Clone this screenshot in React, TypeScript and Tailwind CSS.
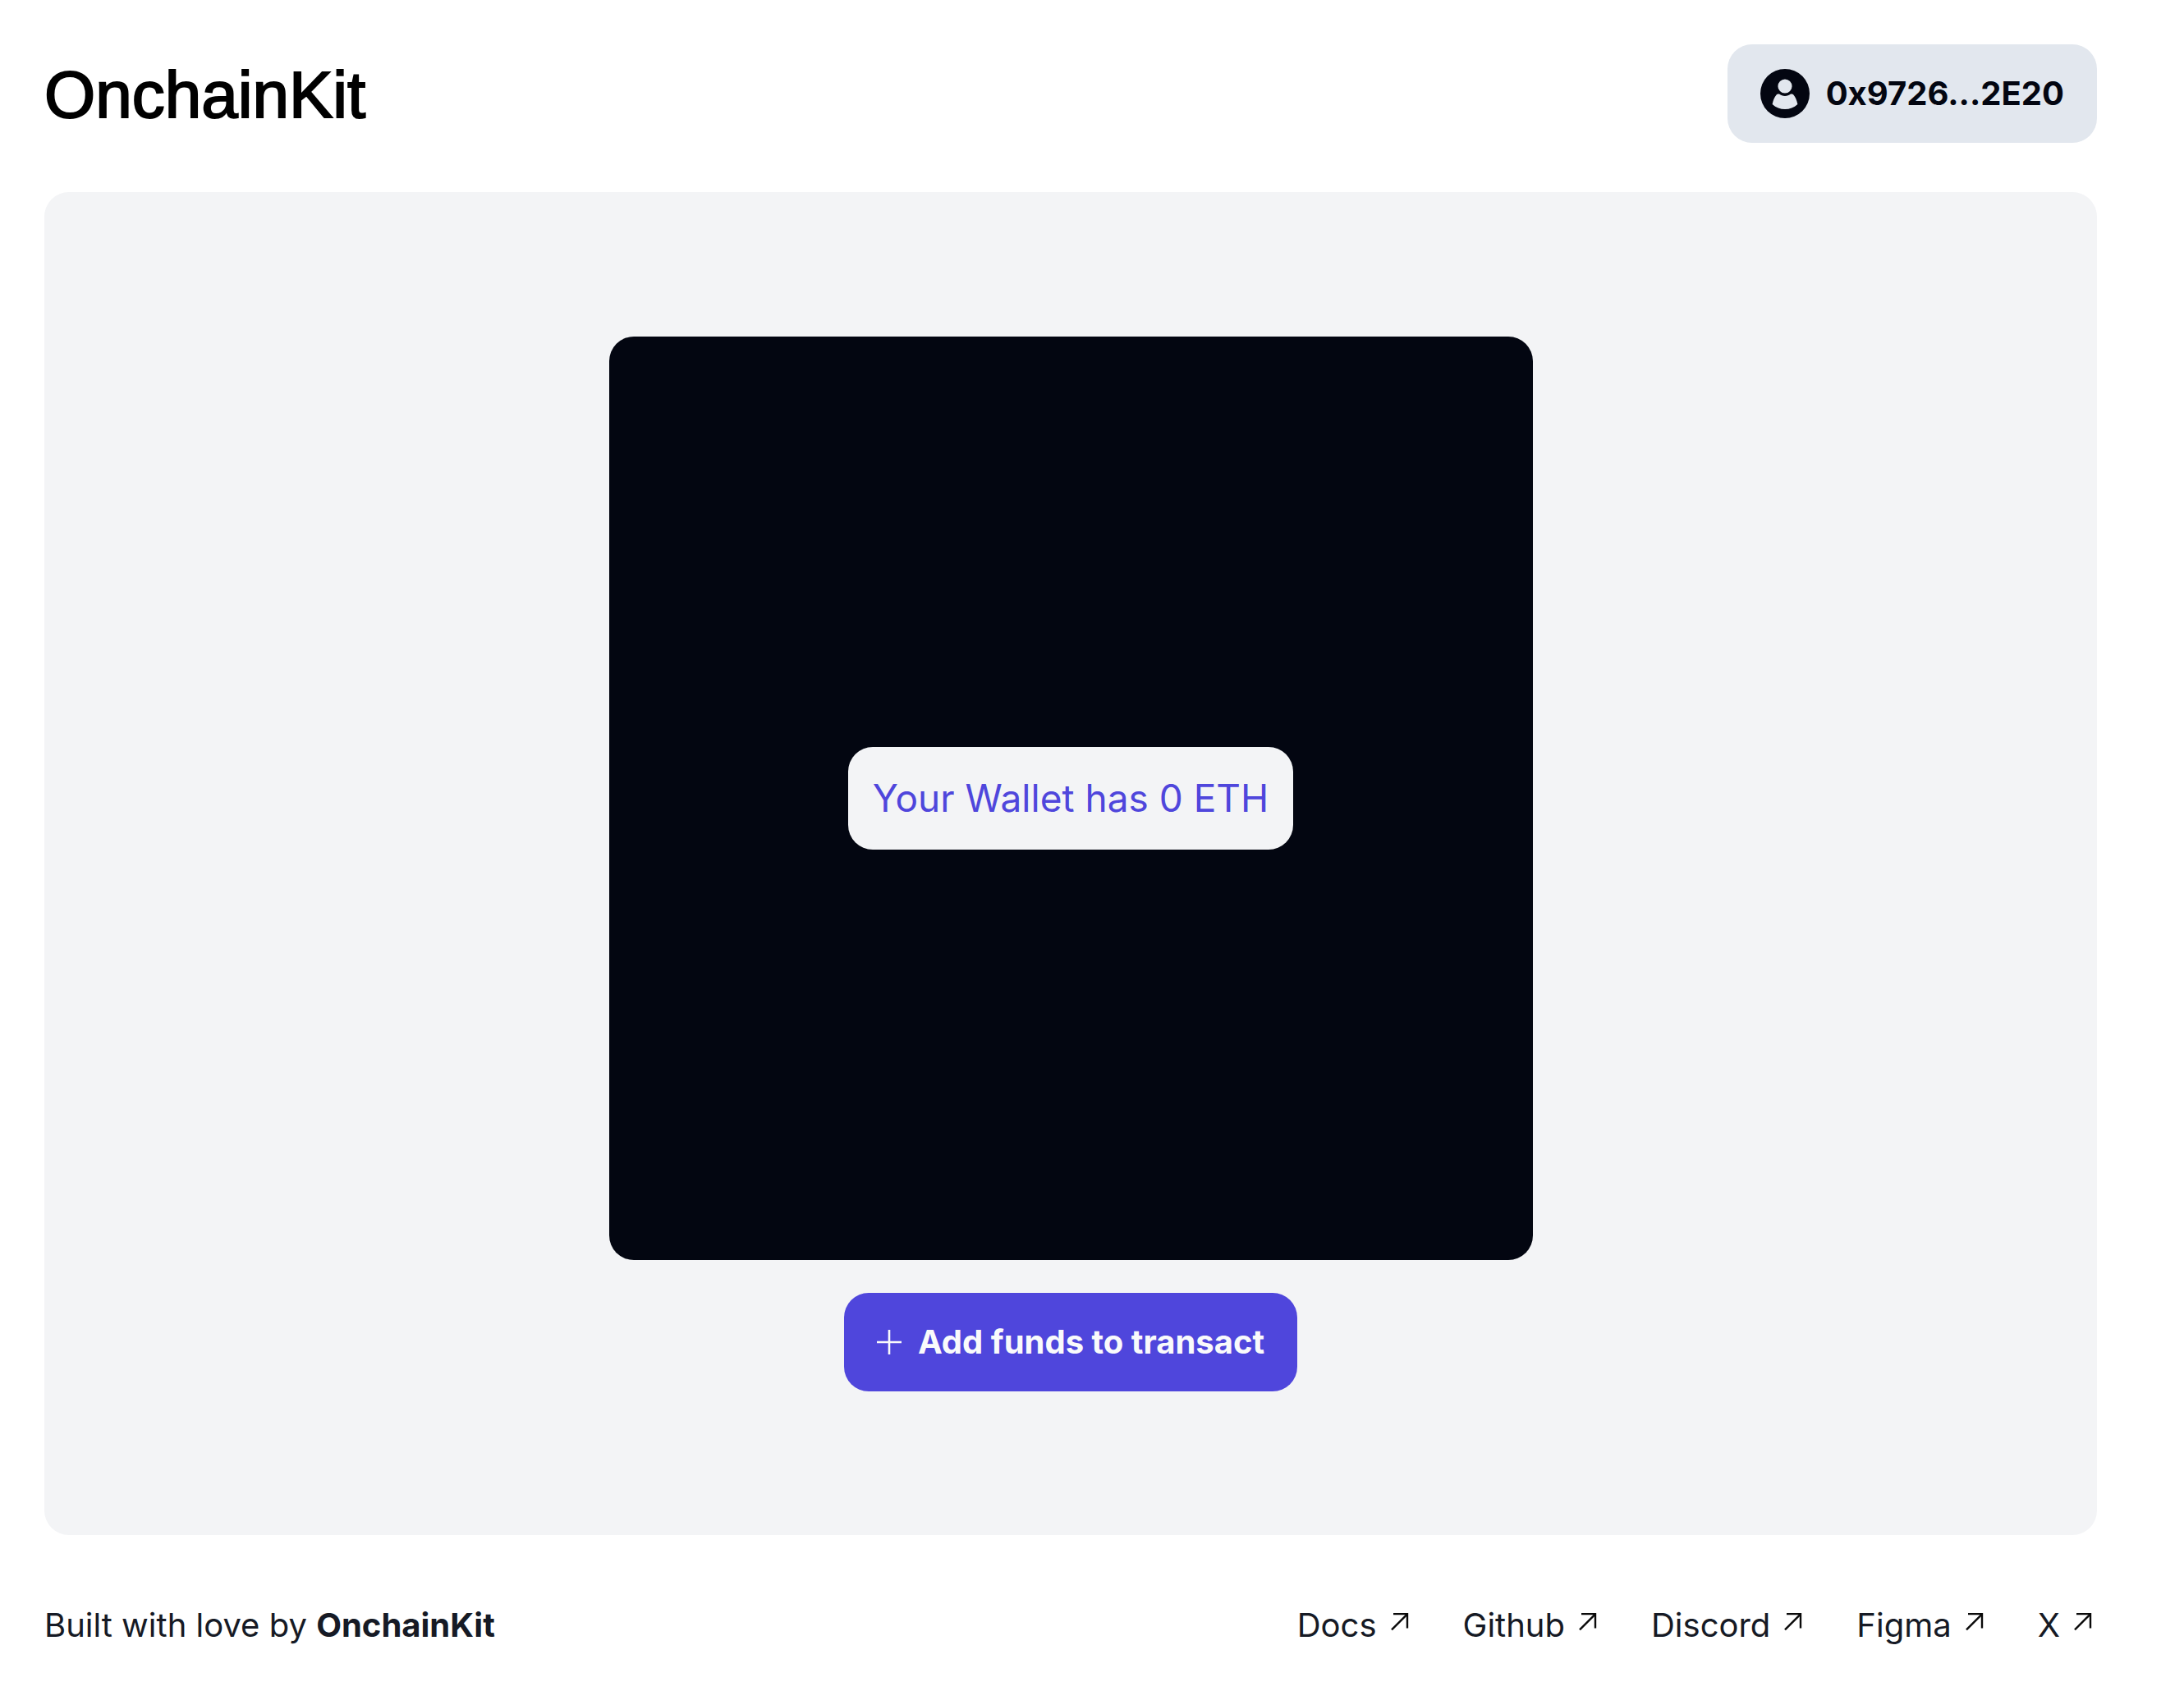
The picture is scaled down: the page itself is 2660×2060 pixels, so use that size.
const links = [
  { label: 'Docs', href: '#docs' },
  { label: 'Github', href: '#github' },
  { label: 'Discord', href: '#discord' },
  { label: 'Figma', href: '#figma' },
  { label: 'X', href: '#x' },
];

function AvatarIcon() {
  return (
    <svg className="size-[60px] shrink-0" viewBox="0 0 60 60" aria-hidden="true">
      <circle cx="30" cy="30" r="30" fill="#030611" />
      <path
        d="M14.6 42.9C15.8 38 17.2 34.4 19.6 31.6C20.4 30.6 21.8 30.4 23 30.6C25 32 27.4 32.9 30 32.9C32.6 32.9 35 32 37 30.6C38.2 30.4 39.6 30.6 40.4 31.6C42.8 34.4 44.2 38 45.4 42.9C41 46.9 35.8 49 30 49C24.2 49 19 46.9 14.6 42.9Z"
        fill="#e2e7ee"
      />
      <circle cx="30" cy="21" r="8.6" fill="#e2e7ee" />
    </svg>
  );
}

function PlusIcon() {
  return (
    <svg className="size-[30px] shrink-0" viewBox="0 0 30 30" fill="none" aria-hidden="true">
      <path d="M15 0V30M0 15H30" stroke="#f9fafb" strokeWidth="2.6" />
    </svg>
  );
}

function ArrowIcon() {
  return (
    <svg className="size-[30px] shrink-0" viewBox="0 0 30 30" fill="none" aria-hidden="true">
      <path d="M5 6.1H22V23.5" stroke="#0a0a0a" strokeWidth="2.4" />
      <path d="M3 25.3L22 6.3" stroke="#0a0a0a" strokeWidth="2.4" />
    </svg>
  );
}

export default function App() {
  return (
    <div className="flex min-h-screen flex-col bg-white pt-[54px] pr-[106px] pb-12 pl-[54px] font-['Inter',sans-serif] text-[40px] leading-[60px] text-[#161a25]">
      <header className="flex items-center justify-between">
        <a
          href="#home"
          className="pt-1 font-['Liberation_Sans',sans-serif] text-[80px] leading-[100px] text-black [-webkit-text-stroke:2px_black]"
        >
          OnchainKit
        </a>
        <button
          type="button"
          className="flex items-center gap-5 rounded-[30px] bg-[#e2e7ee] px-10 py-[30px] font-bold text-[#030611]"
        >
          <AvatarIcon />
          <span>0x9726...2E20</span>
        </button>
      </header>

      <main className="mt-[60px] flex flex-col items-center gap-10 rounded-[30px] bg-[#f3f4f6] pt-44 pb-[175px]">
        <div className="flex aspect-square w-[45%] items-center justify-center rounded-[30px] bg-[#030611]">
          <div className="rounded-[30px] bg-[#f3f4f6] px-[30px] py-[30px] text-[46px] leading-[65px] text-[#4f46dc]">
            Your Wallet has 0 ETH
          </div>
        </div>
        <button
          type="button"
          className="flex items-center gap-5 rounded-[30px] bg-[#4f46dc] px-10 py-[30px] font-bold text-[#f9fafb]"
        >
          <PlusIcon />
          <span>Add funds to transact</span>
        </button>
      </main>

      <footer className="mt-20 flex items-center justify-between">
        <p>
          Built with love by{' '}
          <a href="#onchainkit" className="font-bold">
            OnchainKit
          </a>
        </p>
        <nav className="flex gap-[60px]">
          {links.map((link) => (
            <a key={link.label} href={link.href} className="flex items-start gap-[15px]">
              {link.label}
              <span className="pt-[10px]">
                <ArrowIcon />
              </span>
            </a>
          ))}
        </nav>
      </footer>
    </div>
  );
}
